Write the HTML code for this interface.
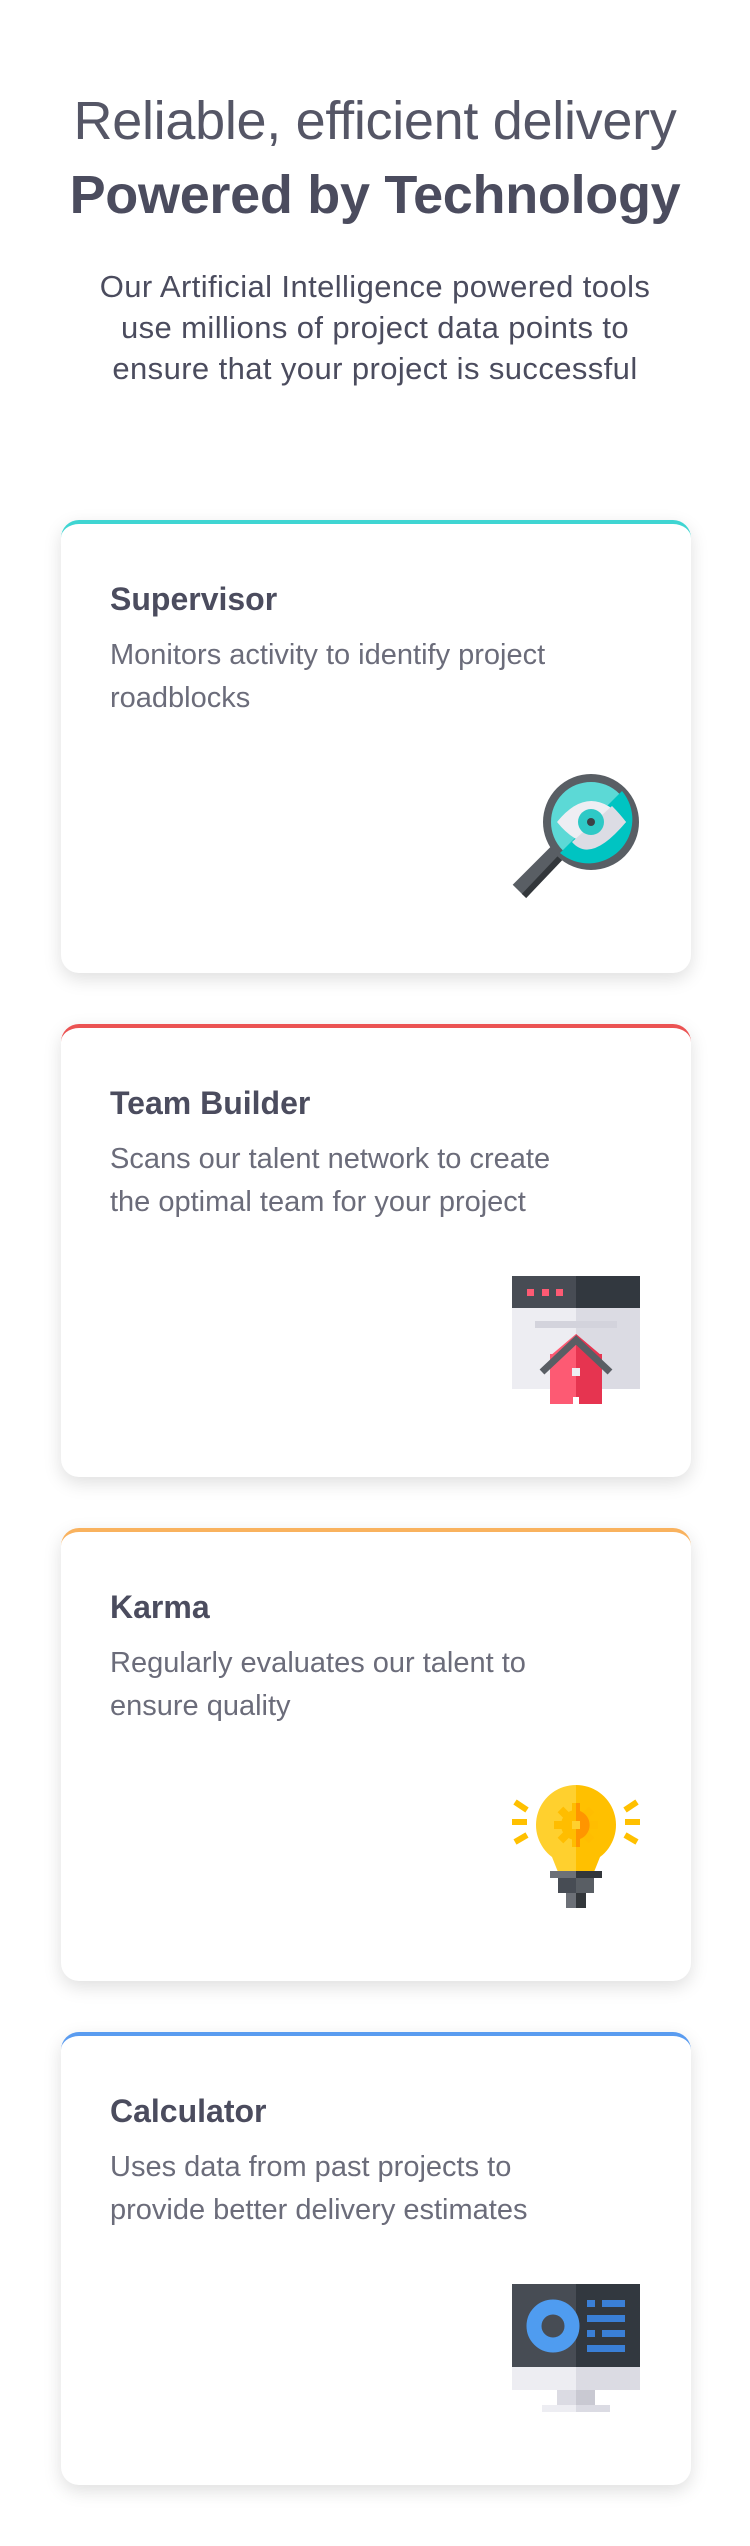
<!DOCTYPE html>
<html><head><meta charset="utf-8">
<style>
*{margin:0;padding:0;box-sizing:border-box}
html,body{width:750px;height:2546px;background:#fff;font-family:"Liberation Sans",sans-serif;color:#4b4c5e;overflow:hidden}
.h1{position:absolute;left:0;width:750px;text-align:center;top:90px;font-size:54px;font-weight:300;color:#555666;letter-spacing:-0.3px;line-height:62px}
.h2{position:absolute;left:0;width:750px;text-align:center;top:162px;font-size:54px;font-weight:700;color:#4b4c5e;line-height:66px;letter-spacing:-0.3px}
.p{position:absolute;left:0;width:750px;text-align:center;top:266px;font-size:31px;line-height:41px;color:#4b4c5e;letter-spacing:0.4px}
.card{position:absolute;left:61px;width:630px;height:453px;background:#fff;border-radius:18px;border-top:4px solid;box-shadow:0 6px 18px rgba(0,0,0,0.13)}
.card h3{position:absolute;left:49px;top:57px;font-size:32px;font-weight:700;color:#4b4c5e}
.card p{position:absolute;left:49px;top:110px;width:480px;font-size:29px;line-height:43px;color:#6b6c7a}
.card svg{position:absolute;left:451px;top:248px;width:128px;height:128px}
</style></head><body>
<div class="h1">Reliable, efficient delivery</div>
<div class="h2">Powered by Technology</div>
<div class="p">Our Artificial Intelligence powered tools<br>use millions of project data points to<br>ensure that your project is successful</div>

<div class="card" style="top:520px;border-color:#3fd5d2">
<h3>Supervisor</h3>
<p>Monitors activity to identify project roadblocks</p>
<svg viewBox="0 0 128 128">
<line x1="6" y1="118" x2="46" y2="78" stroke="#595e64" stroke-width="15"/>
<line x1="12" y1="124" x2="50" y2="84" stroke="#33373b" stroke-width="6"/>
<circle cx="79" cy="50" r="44" fill="#5cd9d6" stroke="#595e64" stroke-width="8"/>
<path d="M110 19 A44 44 0 0 1 48 81 Z" fill="#00c4c2"/>
<path d="M45 50 Q79 8 114 50 Q79 92 45 50Z" fill="#eeeef3"/>
<path d="M100 34 Q108 42 114 50 Q79 92 60 70Z" fill="#dcdce4"/>
<circle cx="79" cy="50" r="13" fill="#2ec9c6"/>
<circle cx="79" cy="50" r="4" fill="#3c4045"/>
</svg>
</div>

<div class="card" style="top:1024px;border-color:#eb5353">
<h3>Team Builder</h3>
<p>Scans our talent network to create the optimal team for your project</p>
<svg viewBox="0 0 128 128">
<rect x="0" y="0" width="64" height="32" fill="#474c54"/>
<rect x="64" y="0" width="64" height="32" fill="#32383f"/>
<rect x="0" y="32" width="64" height="81" fill="#ededf2"/>
<rect x="64" y="32" width="64" height="81" fill="#dbdbe3"/>
<rect x="15" y="13" width="7" height="7" fill="#fd5a73"/>
<rect x="30" y="13" width="7" height="7" fill="#fd5a73"/>
<rect x="44" y="13" width="7" height="7" fill="#fd5a73"/>
<rect x="23" y="45" width="82" height="7" fill="#d3d3dc"/>
<rect x="38" y="78" width="26" height="50" fill="#fd5a73"/>
<rect x="64" y="78" width="26" height="50" fill="#e63450"/>
<path d="M38 80 L64 58 L90 80Z" fill="#fd5a73"/>
<path d="M64 58 L90 80 L64 80Z" fill="#e63450"/>
<path d="M30 96 L64 64 L98 96" fill="none" stroke="#595e64" stroke-width="7"/>
<rect x="60" y="92" width="8" height="8" fill="#ededf2"/>
<rect x="61" y="121" width="6" height="7" fill="#fff"/>
</svg>
</div>

<div class="card" style="top:1528px;border-color:#f9b25e">
<h3>Karma</h3>
<p>Regularly evaluates our talent to ensure quality</p>
<svg viewBox="0 0 128 128">
<path d="M64 5 A40 40 0 0 0 40 77 L46 92 L64 92Z" fill="#ffd02e"/>
<path d="M64 5 A40 40 0 0 1 88 77 L82 92 L64 92Z" fill="#ffc000"/>
<g fill="#ffbd00"><rect x="60" y="23" width="8" height="44"/><rect x="42" y="41" width="44" height="8"/><circle cx="64" cy="45" r="15"/><rect x="60" y="23" width="8" height="44" transform="rotate(45 64 45)"/><rect x="60" y="23" width="8" height="44" transform="rotate(-45 64 45)"/></g>
<path d="M64 23 h4 v8 a15 15 0 0 1 0 28 v8 h-4Z" fill="#ff9500"/>
<rect x="60" y="41" width="8" height="8" fill="#ffd02e"/>
<g stroke="#ffc000" stroke-width="6"><line x1="3" y1="22" x2="15" y2="30"/><line x1="0" y1="42" x2="15" y2="42"/><line x1="3" y1="62" x2="15" y2="55"/><line x1="125" y1="22" x2="113" y2="30"/><line x1="128" y1="42" x2="113" y2="42"/><line x1="125" y1="62" x2="113" y2="55"/></g>
<rect x="38" y="91" width="26" height="7" fill="#6c7077"/><rect x="64" y="91" width="26" height="7" fill="#33373b"/>
<rect x="46" y="98" width="18" height="15" fill="#474c54"/><rect x="64" y="98" width="18" height="15" fill="#595e64"/>
<rect x="54" y="113" width="10" height="15" fill="#6c7077"/><rect x="64" y="113" width="10" height="15" fill="#33373b"/>
</svg>
</div>

<div class="card" style="top:2032px;border-color:#5a9cf0">
<h3>Calculator</h3>
<p>Uses data from past projects to provide better delivery estimates</p>
<svg viewBox="0 0 128 128">
<rect x="0" y="0" width="64" height="83" fill="#474c54"/>
<rect x="64" y="0" width="64" height="83" fill="#32383f"/>
<circle cx="41" cy="42" r="19" fill="none" stroke="#4f9cf0" stroke-width="15"/>
<g fill="#3a7fd6"><rect x="75" y="16" width="8" height="7"/><rect x="90" y="16" width="23" height="7"/><rect x="75" y="31" width="38" height="7"/><rect x="75" y="46" width="8" height="7"/><rect x="90" y="46" width="23" height="7"/><rect x="75" y="61" width="38" height="7"/></g>
<rect x="0" y="83" width="64" height="23" fill="#ededf2"/><rect x="64" y="83" width="64" height="23" fill="#dbdbe3"/>
<rect x="45" y="106" width="19" height="15" fill="#dbdbe3"/><rect x="64" y="106" width="19" height="15" fill="#c9c9d2"/>
<rect x="30" y="121" width="34" height="7" fill="#ededf2"/><rect x="64" y="121" width="34" height="7" fill="#dbdbe3"/>
</svg>
</div>
</body></html>
